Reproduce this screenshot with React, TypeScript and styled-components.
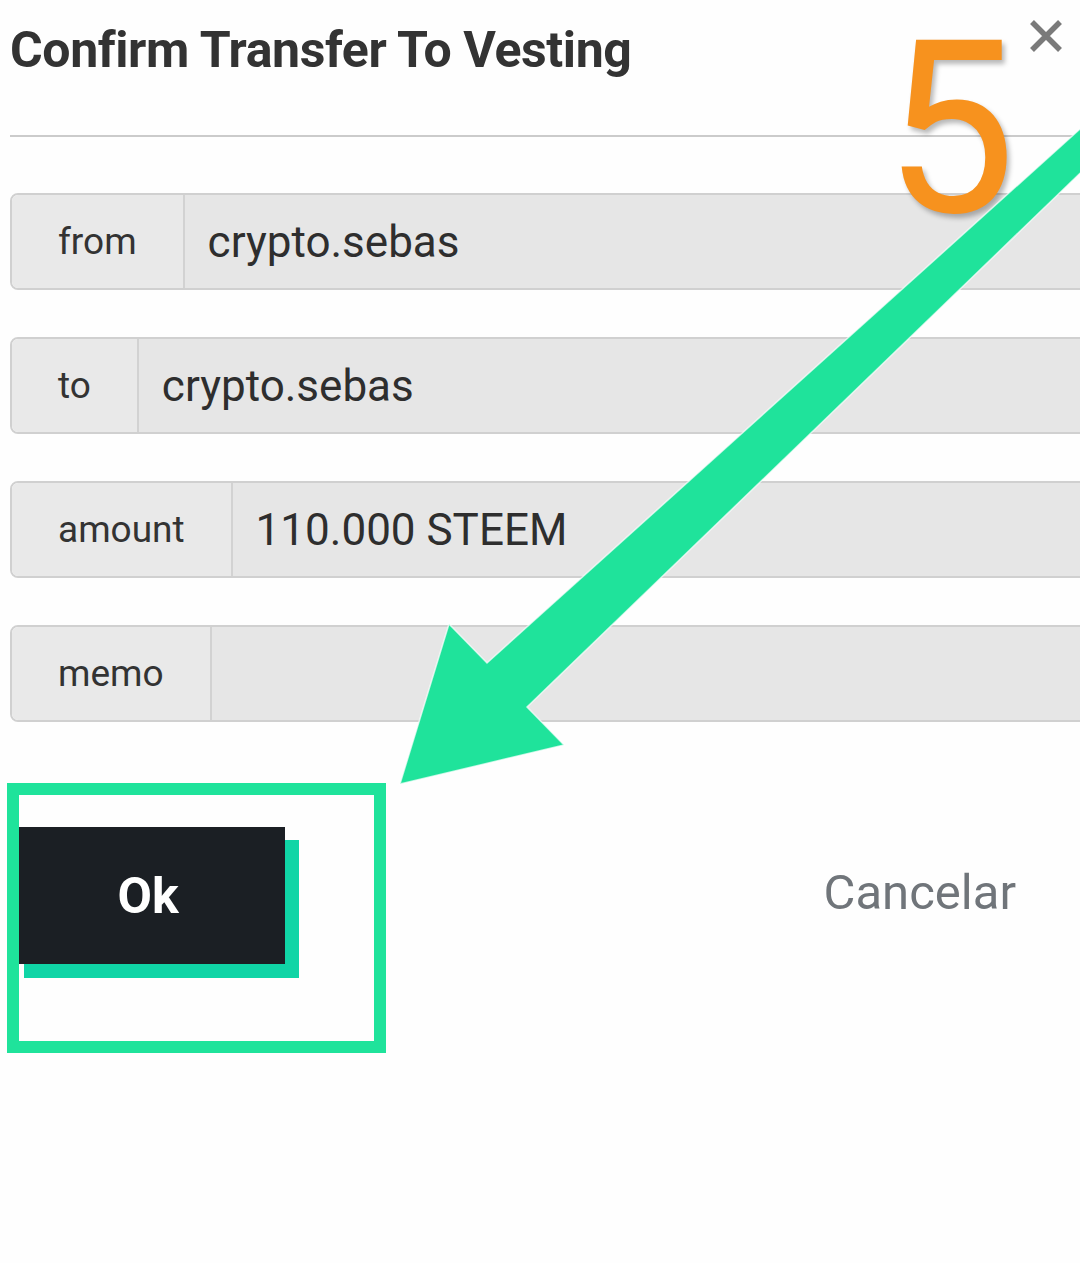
import React from "react";
import styled, { createGlobalStyle } from "styled-components";

const GlobalStyle = createGlobalStyle`
  html, body {
    margin: 0;
    padding: 0;
    background: #fefefe;
    overflow: hidden;
  }
  body {
    font-family: Roboto, "Liberation Sans", Arial, sans-serif;
  }
`;

const Page = styled.div`
  position: relative;
  width: 1080px;
  height: 1263px;
  overflow: hidden;
  background: #fefefe;
`;

const Dialog = styled.div`
  padding-left: 10px;
`;

const Header = styled.div`
  display: flex;
  justify-content: space-between;
  align-items: flex-start;
  padding-right: 18px;
  height: 135px;
`;

const Title = styled.h1`
  margin: 20px 0 0;
  font-size: 50px;
  line-height: 60px;
  font-weight: 700;
  color: #333333;
  letter-spacing: -0.4px;
`;

const CloseButton = styled.button`
  margin-top: 20px;
  width: 32px;
  height: 32px;
  padding: 0;
  border: 0;
  background: none;
  svg {
    display: block;
  }
`;

const Divider = styled.div`
  height: 2px;
  background: #cbcbcb;
`;

const Fields = styled.div`
  display: flex;
  flex-direction: column;
  gap: 47px;
  margin-top: 56px;
`;

const InputGroup = styled.div`
  display: flex;
  width: 1120px;
  height: 97px;
  box-sizing: border-box;
  border: 2px solid #d0d0d0;
  border-radius: 8px;
  overflow: hidden;
`;

const Addon = styled.div`
  display: flex;
  align-items: center;
  padding: 0 46px;
  background: #e9e9e9;
  border-right: 2px solid #d2d2d2;
  font-size: 37px;
  color: #333333;
`;

const Value = styled.div`
  flex: 1;
  display: flex;
  align-items: center;
  padding-left: 23px;
  background: #e6e6e6;
  font-size: 44px;
  color: #2e2e2e;
`;

const Footer = styled.div`
  display: flex;
  justify-content: space-between;
  align-items: center;
  margin-top: 105px;
  padding: 0 64px 0 9px;
`;

const OkWrap = styled.div`
  position: relative;
  z-index: 0;
`;

const OkButton = styled.button`
  position: relative;
  width: 266px;
  height: 137px;
  border: 0;
  padding: 0 8px 0 0;
  background: #1b1f24;
  color: #ffffff;
  font-family: Roboto, "Liberation Sans", Arial, sans-serif;
  font-size: 50px;
  font-weight: 700;
  &::before {
    content: "";
    position: absolute;
    left: 5px;
    top: 13px;
    right: -14px;
    bottom: -14px;
    background: #10d5a6;
    z-index: -1;
  }
`;

const CancelButton = styled.button`
  border: 0;
  padding: 0 0 6px;
  background: none;
  font-family: Roboto, "Liberation Sans", Arial, sans-serif;
  font-size: 49px;
  color: #70757a;
`;

// anotaciones encima de la captura
const StepNumber = styled.div`
  position: absolute;
  left: 884px;
  top: 8px;
  font-family: Roboto, "Liberation Sans", Arial, sans-serif;
  font-size: 242px;
  line-height: 1;
  color: #f7921e;
  text-shadow: 3px 4px 5px rgba(0, 0, 0, 0.28);
  transform: scaleX(0.97);
  transform-origin: left top;
`;

const Highlight = styled.div`
  position: absolute;
  left: 7px;
  top: 783px;
  width: 379px;
  height: 270px;
  box-sizing: border-box;
  border: 12px solid #1fe39b;
`;

const ArrowLayer = styled.svg`
  position: absolute;
  left: 0;
  top: 0;
  pointer-events: none;
`;

const fields = [
  { label: "from", value: "crypto.sebas" },
  { label: "to", value: "crypto.sebas" },
  { label: "amount", value: "110.000 STEEM" },
  { label: "memo", value: "" },
];

const App: React.FC = () => {
  return (
    <Page>
      <GlobalStyle />
      <Dialog>
        <Header>
          <Title>Confirm Transfer To Vesting</Title>
          <CloseButton aria-label="close">
            <svg width="32" height="32" viewBox="0 0 32 32">
              <path
                d="M2 2 L30 30 M30 2 L2 30"
                stroke="#7a7a7a"
                strokeWidth="5.5"
              />
            </svg>
          </CloseButton>
        </Header>
        <Divider />
        <Fields>
          {fields.map((f) => (
            <InputGroup key={f.label}>
              <Addon>{f.label}</Addon>
              <Value>{f.value}</Value>
            </InputGroup>
          ))}
        </Fields>
        <Footer>
          <OkWrap>
            <OkButton>Ok</OkButton>
          </OkWrap>
          <CancelButton>Cancelar</CancelButton>
        </Footer>
      </Dialog>

      <StepNumber>5</StepNumber>
      <Highlight />
      <ArrowLayer width="1080" height="1263" viewBox="0 0 1080 1263">
        <polygon
          points="1100,111 487,663 449,624 400,784 564,745 527,707 1100,154"
          fill="#1fe39b"
          stroke="rgba(255,255,255,0.7)"
          strokeWidth="1.5"
        />
      </ArrowLayer>
    </Page>
  );
};

export default App;
